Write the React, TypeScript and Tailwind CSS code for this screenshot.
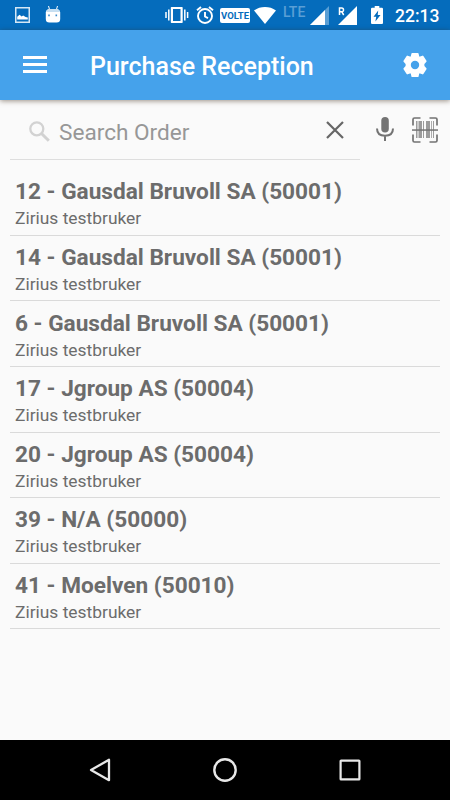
import type { ReactNode } from 'react';

type Order = {
  number: number;
  customer: string;
  user: string;
};

const orders: Order[] = [
  { number: 12, customer: 'Gausdal Bruvoll SA (50001)', user: 'Zirius testbruker' },
  { number: 14, customer: 'Gausdal Bruvoll SA (50001)', user: 'Zirius testbruker' },
  { number: 6, customer: 'Gausdal Bruvoll SA (50001)', user: 'Zirius testbruker' },
  { number: 17, customer: 'Jgroup AS (50004)', user: 'Zirius testbruker' },
  { number: 20, customer: 'Jgroup AS (50004)', user: 'Zirius testbruker' },
  { number: 39, customer: 'N/A (50000)', user: 'Zirius testbruker' },
  { number: 41, customer: 'Moelven (50010)', user: 'Zirius testbruker' },
];

function Icon({ box, className, children }: { box: string; className: string; children: ReactNode }) {
  return (
    <svg viewBox={box} fill="currentColor" className={`block shrink-0 ${className}`} aria-hidden="true">
      {children}
    </svg>
  );
}

function StatusBar() {
  return (
    <div className="flex h-[30px] items-center bg-[#056cbc] pl-[15px] text-white">
      <Icon box="0 0 15 16" className="h-4 w-[15px] text-[#d5e7f5]">
        <path d="M0 0h15v16H0zM1.5 1.5v13h12v-13z" fillRule="evenodd" />
        <path d="M2.2 12.6V9.8l2.4-2 2 1.8 1.6-1 2.4 1.4 2.2.4v2.2z" fill="#fff" />
      </Icon>
      <Icon box="0 0 16 18" className="-mt-0.5 ml-[15px] h-[18px] w-4">
        <path d="M3.5 1l1.2 4M12.5 1l-1.2 4" stroke="currentColor" strokeWidth="1" />
        <path d="M.8 7.5Q1 4.5 4 4h8q3 .5 3.2 3.5V14q0 3.5-3.5 3.5H4.3Q.8 17.5.8 14z" />
        <path d="M1 7Q1.5 4.5 4 4h8q2.5.5 3 3z" fill="#c7dff1" />
        <path d="M3.2 9.5h1.6v1.7H3.2zM10.5 9.5h1.6v1.7h-1.6z" fill="#3b8bcb" />
      </Icon>

      <Icon box="0 0 24 16" className="ml-[104px] h-4 w-6">
        <path d="M6.5 0H17q.7 0 .7.7v14.6q0 .7-.7.7H6.5q-.7 0-.7-.7V.7q0-.7.7-.7zM8 2v12h7.5V2z" fillRule="evenodd" />
        <path d="M3.8 2.5v11M1 5v6M19.8 2.5v11M22.6 5v6" stroke="currentColor" strokeWidth="1.5" />
      </Icon>
      <Icon box="0 0 18 18" className="ml-[7px] h-[18px] w-[18px]">
        <g fill="none" stroke="currentColor" strokeWidth="1.9">
          <circle cx="9" cy="10" r="7" />
          <path d="M1 4.2l4-3.3M17 4.2l-4-3.3M9 6v4.5l3 1.7" />
        </g>
      </Icon>
      <span className="ml-[6px] flex h-[15px] w-[30px] items-center justify-center rounded-[2px] bg-white pt-px text-[9.5px] leading-[14px] font-bold text-[#056cbc]">
        VOLTE
      </span>
      <Icon box="0 0 22 17" className="ml-1 h-[17px] w-[22px]">
        <path d="M11 17L0 3.4Q5 0 11 0t11 3.4z" />
      </Icon>
      <span className="-mt-[7px] ml-[7px] w-[27px] text-[14px] leading-[14px] font-medium text-[#5a9fd5]">
        LTE
      </span>
      <Icon box="0 0 19 19" className="h-[19px] w-[19px]">
        <path d="M0 19L19 0v19z" fill="#5a9fd5" />
        <path d="M0 19L15 4v15z" />
      </Icon>
      <Icon box="0 0 19 19" className="ml-[9px] h-[19px] w-[19px]">
        <path d="M0 19L19 0v19z" />
        <path d="M0 0h9v9.5H0z" fill="#056cbc" />
        <path d="M1.5 9V2h2.2Q5.5 2 5.5 3.9T3.7 5.7H1.5m2.2 0L5.7 9" fill="none" stroke="currentColor" strokeWidth="1.5" />
      </Icon>
      <Icon box="0 0 12 18" className="ml-[14px] h-[18px] w-3">
        <path d="M3.7 0h4.6v1.8h2.6q1.1 0 1.1 1.1v14q0 1.1-1.1 1.1H1.1Q0 18 0 16.9v-14q0-1.1 1.1-1.1h2.6z" />
        <path d="M7.2 4.5L2.5 10.8h2.7L4.4 15.5 9.5 9H6.7z" fill="#056cbc" />
      </Icon>
      <span className="ml-[12px] pt-[2px] text-[17.5px] leading-5 font-medium">22:13</span>
    </div>
  );
}

function AppBar() {
  return (
    <header className="relative flex h-[70px] items-center bg-[#45a2eb] px-[23px] text-white shadow-[0_1px_5px_rgba(60,40,20,0.5)]">
      <button className="-mt-px flex w-6 flex-col gap-1" aria-label="Menu">
        <span className="h-[3px] w-6 bg-white" />
        <span className="h-[3px] w-6 bg-white" />
        <span className="h-[3px] w-6 bg-white" />
      </button>
      <h1 className="ml-[43px] pt-[3px] text-[25px] leading-[30px] font-medium">Purchase Reception</h1>
      <button className="ml-auto" aria-label="Settings">
        <Icon box="-12 -12 24 24" className="h-6 w-6">
          <path
            fillRule="evenodd"
            stroke="currentColor"
            strokeWidth="1.6"
            strokeLinejoin="round"
            d="M-2.8-11.2H2.8L3.5-8.1 4.5-7.6 7.7-8.6 10.8-3.9 8.6-1.4V1.4L10.8 3.9 7.7 8.6 4.5 7.6 3.5 8.1 2.8 11.2H-2.8L-3.5 8.1-4.5 7.6-7.7 8.6-10.8 3.9-8.6 1.4V-1.4L-10.8-3.9-7.7-8.6-4.5-7.6-3.5-8.1zM0-5A5 5 0 1 0 0 5 5 5 0 1 0 0-5z"
          />
        </Icon>
      </button>
    </header>
  );
}

function SearchRow() {
  return (
    <div className="flex h-[60px] pr-3 pl-2.5 text-[#737373]">
      <div className="flex w-[350px] items-center border-b border-[#dedede] pt-[3px] pr-[16px] pl-[19px]">
        <Icon box="0 0 21 21" className="h-[21px] w-[21px] text-[#d2d2d2]">
          <g fill="none" stroke="currentColor" strokeWidth="2.3">
            <circle cx="7.8" cy="7.8" r="6.5" />
            <path d="M12.5 12.5l7.3 7.3" strokeWidth="3" />
          </g>
        </Icon>
        <span className="ml-[9px] pt-[4px] text-[22.6px] leading-7 text-[#979797]">Search Order</span>
        <Icon box="0 0 18 18" className="-mt-[3px] ml-auto h-[18px] w-[18px] text-[#666]">
          <path d="M1 1l16 16M17 1L1 17" stroke="currentColor" strokeWidth="2.2" />
        </Icon>
      </div>
      <Icon box="0 0 18 24" className="mt-[17px] ml-4 h-6 w-[18px]">
        <rect x="5.3" y="0" width="7.5" height="15.5" rx="3.75" />
        <path d="M1 11.5q0 7.2 8 7.2t8-7.2M9 18.5V24" fill="none" stroke="currentColor" strokeWidth="2" />
      </Icon>
      <Icon box="0 0 26 26" className="mt-[17px] ml-[18px] h-[26px] w-[26px]">
        <path
          d="M1 8.5v-6Q1 1 2.5 1h6M17.5 1h6Q25 1 25 2.5v6M25 17.5v6q0 1.5-1.5 1.5h-6M8.5 25h-6Q1 25 1 23.5v-6"
          fill="none"
          stroke="currentColor"
          strokeWidth="1.7"
        />
        <path d="M4 4h1.5v17H4zM6.500 4H10v17H6.500zM11 4h1v17h-1zM14 4h4v17h-4zM19 4h.8v17H19zM21 4h1v17h-1z" opacity=".7" />
        <path d="M0 12.3h26v1.5H0z" />
      </Icon>
    </div>
  );
}

function NavBar() {
  return (
    <nav className="flex h-[60px] items-center justify-between bg-black px-[89px] text-[#e8e8e8]">
      <Icon box="0 0 22 24" className="h-6 w-[22px]">
        <path d="M2 12L20 1.8v20.4z" fill="none" stroke="currentColor" strokeWidth="2.3" strokeLinejoin="round" />
      </Icon>
      <Icon box="0 0 24 24" className="h-6 w-6">
        <circle cx="12" cy="12" r="10.7" fill="none" stroke="currentColor" strokeWidth="2.4" />
      </Icon>
      <Icon box="0 0 22 22" className="h-[22px] w-[22px]">
        <rect x="1.6" y="1.6" width="18.8" height="18.8" rx=".5" fill="none" stroke="currentColor" strokeWidth="2.2" />
      </Icon>
    </nav>
  );
}

export default function App() {
  return (
    <div className="flex h-[800px] w-[450px] flex-col overflow-hidden bg-[#fafafa] font-[Roboto,sans-serif]">
      <StatusBar />
      <AppBar />
      <main className="flex-1">
        <SearchRow />
        <ul className="px-2.5 pt-[10px]">
          {orders.map((order) => (
            <li key={order.number} className="h-[65.625px] border-b-[1.5px] border-[#dadada] pt-[8.3px] pl-[5px] text-[#6c6c6c]">
              <h2 className="text-[22.64px] leading-[28px] font-bold">
                {order.number} - {order.customer}
              </h2>
              <p className="text-[17.4px] leading-[24px]">{order.user}</p>
            </li>
          ))}
        </ul>
      </main>
      <NavBar />
    </div>
  );
}
